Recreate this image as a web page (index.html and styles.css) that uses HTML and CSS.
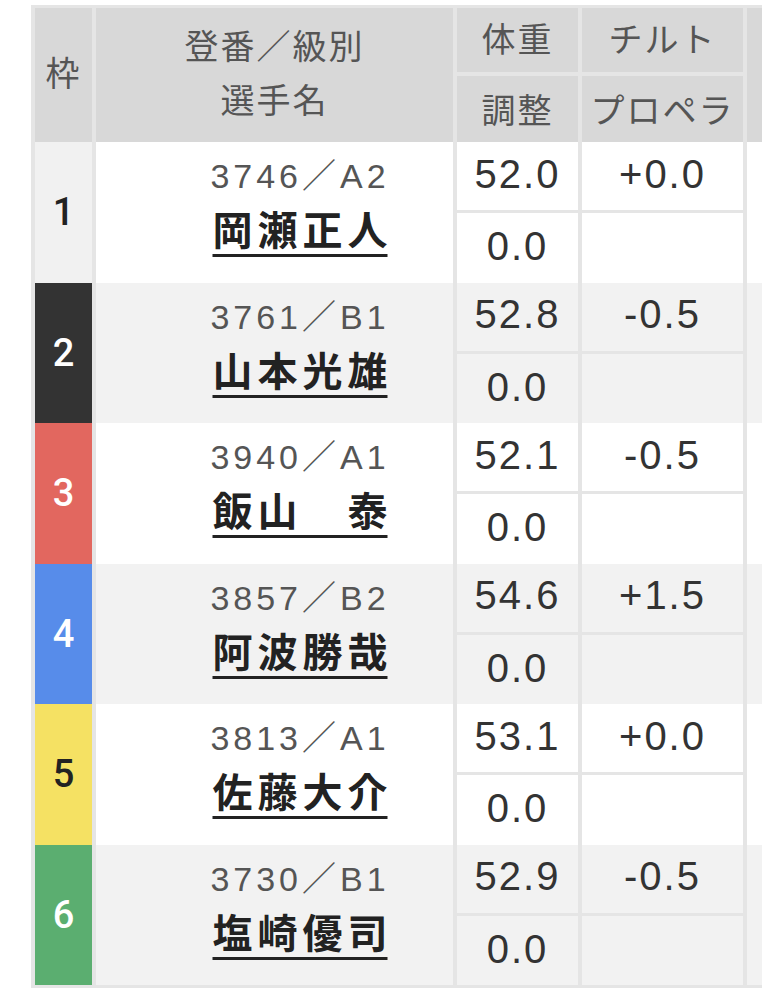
FILE: index.html
```html
<!DOCTYPE html>
<html lang="ja">
<head>
<meta charset="utf-8">
<title>出走表</title>
<link rel="stylesheet" href="styles.css">
</head>
<body>
<div class="table-wrap">
<table class="entry">
  <colgroup>
    <col class="c-waku"><col class="c-name"><col class="c-weight"><col class="c-tilt"><col class="c-extra">
  </colgroup>
  <thead>
    <tr>
      <th rowspan="2" class="h-waku">枠</th>
      <th rowspan="2" class="h-name">登番／級別<br>選手名</th>
      <th class="h-top">体重</th>
      <th class="h-top">チルト</th>
      <th rowspan="2" class="h-extra"></th>
    </tr>
    <tr>
      <th class="h-bot">調整</th>
      <th class="h-bot">プロペラ</th>
    </tr>
  </thead>
  <tbody class="odd">
    <tr class="top">
      <td rowspan="2" class="waku waku-1">1</td>
      <td rowspan="2" class="player"><div class="reg">3746／A2</div><a class="name">岡瀬正人</a></td>
      <td class="num">52.0</td><td class="num">+0.0</td>
      <td rowspan="2" class="extra"></td>
    </tr>
    <tr class="bot"><td class="num">0.0</td><td class="num"></td></tr>
  </tbody>
  <tbody class="even">
    <tr class="top">
      <td rowspan="2" class="waku waku-2">2</td>
      <td rowspan="2" class="player"><div class="reg">3761／B1</div><a class="name">山本光雄</a></td>
      <td class="num">52.8</td><td class="num">-0.5</td>
      <td rowspan="2" class="extra"></td>
    </tr>
    <tr class="bot"><td class="num">0.0</td><td class="num"></td></tr>
  </tbody>
  <tbody class="odd">
    <tr class="top">
      <td rowspan="2" class="waku waku-3">3</td>
      <td rowspan="2" class="player"><div class="reg">3940／A1</div><a class="name">飯山　泰</a></td>
      <td class="num">52.1</td><td class="num">-0.5</td>
      <td rowspan="2" class="extra"></td>
    </tr>
    <tr class="bot"><td class="num">0.0</td><td class="num"></td></tr>
  </tbody>
  <tbody class="even">
    <tr class="top">
      <td rowspan="2" class="waku waku-4">4</td>
      <td rowspan="2" class="player"><div class="reg">3857／B2</div><a class="name">阿波勝哉</a></td>
      <td class="num">54.6</td><td class="num">+1.5</td>
      <td rowspan="2" class="extra"></td>
    </tr>
    <tr class="bot"><td class="num">0.0</td><td class="num"></td></tr>
  </tbody>
  <tbody class="odd">
    <tr class="top">
      <td rowspan="2" class="waku waku-5">5</td>
      <td rowspan="2" class="player"><div class="reg">3813／A1</div><a class="name">佐藤大介</a></td>
      <td class="num">53.1</td><td class="num">+0.0</td>
      <td rowspan="2" class="extra"></td>
    </tr>
    <tr class="bot"><td class="num">0.0</td><td class="num"></td></tr>
  </tbody>
  <tbody class="even">
    <tr class="top">
      <td rowspan="2" class="waku waku-6">6</td>
      <td rowspan="2" class="player"><div class="reg">3730／B1</div><a class="name">塩崎優司</a></td>
      <td class="num">52.9</td><td class="num">-0.5</td>
      <td rowspan="2" class="extra"></td>
    </tr>
    <tr class="bot"><td class="num">0.0</td><td class="num"></td></tr>
  </tbody>
</table>
</div>
</body>
</html>
```
FILE: styles.css
```css
html, body {
  margin: 0;
  padding: 0;
  background: #ffffff;
  overflow: hidden;
}

.table-wrap {
  width: 100%;
  overflow: hidden;
}

.entry {
  margin: 5px 0 0 31px;
  border-collapse: separate;
  border-spacing: 4px 0;
  padding: 3px 0;
  background: #e5e5e5;
  table-layout: fixed;
  width: 820px;
  font-family: "Liberation Sans", "Noto Sans CJK JP", sans-serif;
}

.c-waku { width: 57px; }
.c-name { width: 357px; }
.c-weight { width: 121px; }
.c-tilt { width: 161px; }
.c-extra { width: 100px; }

.entry th,
.entry td {
  padding: 0;
  text-align: center;
  vertical-align: middle;
}

.entry thead th {
  background: #d8d8d8;
  color: #555555;
  font-family: "Noto Sans CJK JP", sans-serif;
  font-weight: 400;
  font-size: 34px;
  letter-spacing: 2px;
  line-height: 54px;
}

.entry thead .h-waku,
.entry thead .h-name {
  padding-bottom: 6px;
}

.entry thead .h-top {
  height: 60px;
  padding-bottom: 4px;
  border-bottom: 4px solid #e5e5e5;
  line-height: 50px;
}

.entry thead .h-bot {
  height: 66px;
}

.odd td { background: #ffffff; }
.even td { background: #f2f2f2; }

.entry .top .num {
  height: 63px;
  padding-bottom: 5px;
  border-bottom: 3px solid #e5e5e5;
}

.entry .bot .num {
  height: 66.5px;
  padding-bottom: 3px;
}

.num {
  font-size: 40px;
  letter-spacing: 2px;
  color: #333333;
  line-height: 44px;
}

.entry .player {
  vertical-align: top;
  padding: 14px 0 0 51px;
  color: #555555;
}

.reg {
  font-size: 34px;
  letter-spacing: 4px;
  line-height: 40px;
}

.name {
  display: inline-block;
  width: 175px;
  margin-top: 10px;
  font-family: "Noto Sans CJK JP", sans-serif;
  font-weight: 700;
  font-size: 40px;
  line-height: 44px;
  color: #222222;
  text-align: justify;
  text-align-last: justify;
  text-decoration: underline;
  text-decoration-thickness: 3px;
  text-underline-offset: 9px;
}

.entry .waku {
  font-family: Roboto, "Liberation Sans", sans-serif;
  font-weight: 500;
  font-size: 38px;
  color: #ffffff;
}

.entry .waku-1 { background: #f1f1f1; color: #222222; }
.entry .waku-2 { background: #333333; }
.entry .waku-3 { background: #e2675f; }
.entry .waku-4 { background: #578cea; }
.entry .waku-5 { background: #f5e163; color: #222222; }
.entry .waku-6 { background: #5bae70; }
```
